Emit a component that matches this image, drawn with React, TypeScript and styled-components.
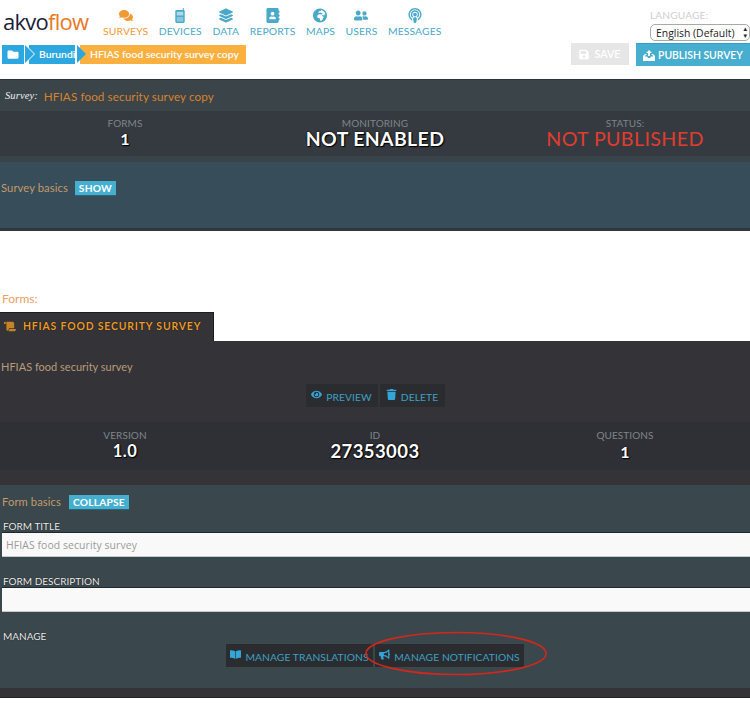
import React from "react";
import styled, { createGlobalStyle } from "styled-components";
import {
  FaComments, FaLayerGroup, FaAddressBook, FaGlobeAfrica, FaUserFriends, FaPodcast,
  FaFolder, FaSave, FaEye, FaTrash, FaBullhorn, FaScroll, FaBookOpen,
} from "react-icons/fa";

const Global = createGlobalStyle`
  html, body { margin: 0; padding: 0; background: #fff; overflow: hidden; }
  body { font-family: Lato, "Open Sans", sans-serif; }
  * { box-sizing: border-box; }
`;
const Page = styled.div`width: 750px; height: 704px; overflow: hidden;`;
const Header = styled.header`height: 79px; position: relative; display: flex; flex-direction: column;`;
const TopRow = styled.div`height: 43px; display: flex; align-items: flex-start;`;
const Logo = styled.div`
  width: 103px; padding: 6px 0 0 3px; font: 400 22px/30px "Open Sans", sans-serif; letter-spacing: -0.75px; color: #1d1c3a;
  span { color: #e8791f; }
`;
const Nav = styled.nav`display: flex; gap: 10.5px; padding-top: 8px;`;
const NavItem = styled.a<{ $active?: boolean }>`
  display: flex; flex-direction: column; align-items: center; gap: 1px;
  font: 400 10.4px/14px Lato, sans-serif; letter-spacing: 0.1px; color: ${p => p.$active ? "#f09a36" : "#4aa9c9"};
  svg { width: 14px; height: 15px; }
`;
const Lang = styled.div`
  margin-left: auto; width: 100px; padding-top: 8px; display: flex; flex-direction: column;
`;
const LangLabel = styled.div`font: 400 10.2px/14px Lato, sans-serif; color: #cfcfcf; letter-spacing: .1px; padding-bottom: 2px;`;
const SelectBox = styled.div`
  position: relative; height: 17px; border: 1px solid #a9a9a9; border-radius: 5px; background: #fff;
  select { display: block; appearance: none; border: 0; background: transparent; width: 100%; height: 100%; padding: 0 0 0 5px; font: 400 10.4px "Open Sans", sans-serif; color: #222; outline: 0; }
`;
const SelectArrows = styled.span`
  position: absolute; right: 2px; top: 1px; font: 7px/7px "DejaVu Sans", sans-serif; color: #222; display: flex; flex-direction: column;
`;
const ActionRow = styled.div`display: flex; align-items: flex-start; padding-left: 2px; height: 36px;`;
const Crumbs = styled.div`display: flex; padding-top: 2px;`;
const Crumb = styled.div<{ $w: number; $orange?: boolean; $ml?: number }>`
  position: relative; height: 19px; width: ${p => p.$w}px; margin-left: ${p => p.$ml ?? 0}px;
  background: ${p => p.$orange ? "#fbb040" : "#2da7e0"}; color: #fff;
  font: 600 10.35px/19px Lato, sans-serif; display: flex; align-items: center;
  svg { width: 12px; height: 11px; margin-left: 5px; }
`;
const Arrow = styled.span<{ $left: number; $c: string }>`
  position: absolute; left: ${p => p.$left}px; top: 0; width: 0; height: 0; z-index: 2;
  border-top: 9.5px solid transparent; border-bottom: 9.5px solid transparent; border-left: 9px solid ${p => p.$c};
`;
const CrumbText = styled.span<{ $pl: number }>`padding-left: ${p => p.$pl}px; white-space: nowrap;`;
const Actions = styled.div`margin-left: auto; display: flex; gap: 7px;`;
const SaveBtn = styled.div`
  width: 58px; height: 22px; background: #e6e6e6; color: #fff; display: flex; align-items: center; justify-content: center; gap: 5px;
  font: 600 10.8px/22px Lato, sans-serif; svg { width: 10px; height: 11px; }
`;
const PublishBtn = styled.div`
  width: 114px; height: 23px; background: #47aecf; border-top: 1px solid #2d9fd0; color: #fff; display: flex; align-items: center; justify-content: center; gap: 3px;
  font: 600 10.4px/22px Lato, sans-serif; svg { width: 12px; height: 11px; flex: none; }
`;
const TitleBand = styled.div`
  height: 32px; background: #3a4449; border-top: 1px solid #2c3338; display: flex; align-items: center; padding-left: 5px; gap: 6px;
  color: #d9822b; font: 400 11.7px/16px Lato, sans-serif; letter-spacing: .1px;
  i { font: italic 400 10.5px "Liberation Serif", serif; color: #eee; }
`;
const Stats = styled.div<{ $h: number; $bg: string }>`
  height: ${p => p.$h}px; background: ${p => p.$bg}; display: grid; grid-template-columns: repeat(3, 250px); text-align: center;
`;
const Stat = styled.div<{ $top: number }>`padding-top: ${p => p.$top}px;`;
const StatLabel = styled.div`font: 400 10px/12px Lato, sans-serif; color: #7f858a; letter-spacing: .1px;`;
const StatValue = styled.div<{ $red?: boolean; $size: number; $mt?: number }>`
  font: 700 ${p => p.$size}px/19px Lato, sans-serif; letter-spacing: .4px; color: ${p => p.$red ? "#e23c2f" : "#fff"};
  margin-top: ${p => p.$mt ?? 0}px;
  ${p => p.$red ? "font-weight: 400;" : "text-shadow: 0 0 2px #000, 1px 1px 1px #000;"}
`;
const Gap = styled.div<{ $h: number; $bg: string }>`height: ${p => p.$h}px; background: ${p => p.$bg};`;
const BasicsBand = styled.div`
  height: 66px; background: #374d59; display: flex; align-items: flex-start; gap: 7px; padding: 19px 0 0 1px;
`;
const OrangeLabel = styled.span`font: 400 11.2px/14px Lato, sans-serif; color: #c29a6b; letter-spacing: .1px;`;
const Pill = styled.span`
  background: #45afd0; color: #fff; font: 700 10.2px/14px Lato, sans-serif; padding: 0 4px; letter-spacing: .2px; box-shadow: 0 1px 0 #2b6478; display: inline-block;
`;
const Forms = styled.div`height: 81px; display: flex; align-items: flex-end; padding: 0 0 6px 2px; font: 400 12px/14px Lato, sans-serif; color: #e8a162;`;
const Tab = styled.div`
  width: 214px; height: 29px; background: #333338; border-top: 1px solid #1c1c20; border-right: 1px solid #1c1c20;
  display: flex; align-items: center; gap: 7px; padding: 0 0 2px 4px; white-space: nowrap;
  color: #ed9a2b; font: 700 10.4px/14px Lato, sans-serif; letter-spacing: .85px; text-shadow: 0 0 1px #000;
  svg { width: 12px; height: 13px; color: #c78426; flex: none; }
`;
const FormPanel = styled.section`background: #333338; height: 356px; display: flex; flex-direction: column;`;
const FormName = styled.div`padding: 19px 0 0 1px; height: 43px; font: 400 11px/14px Lato, sans-serif; color: #b89b78;`;
const BtnRow = styled.div`display: flex; justify-content: center; gap: 2px;`;
const DarkBtn = styled.div<{ $w: number }>`
  height: 23px; width: ${p => p.$w}px; background: #2b2c30; display: flex; align-items: center; justify-content: center; gap: 4px; flex: none; padding-top: 3px;
  color: #3da0c4; font: 400 10.3px/14px Lato, sans-serif; letter-spacing: .05px; white-space: nowrap;
  svg { width: 11px; height: 11px; color: #35a4d6; margin-top: -5px; flex: none; }
`;
const FormStatsWrap = styled.div`margin-top: 15px;`;
const Basics = styled.div`margin-top: 15px; height: 203px; background: #3a474d; padding: 9px 0 0 2px; position: relative;`;
const BasicsHead = styled.div`display: flex; align-items: center; gap: 8px; height: 15px;`;
const FieldLabel = styled.div`font: 400 10px/12px Lato, sans-serif; color: #eee; text-shadow: 0 0 1px #000; padding-left: 1px;`;
const Input = styled.div`
  height: 25px; background: #f9f9f9; border-top: 1px solid #1f2a30; border-bottom: 1px solid #c4c8c9; margin-bottom: 18px;
  padding-left: 4px; font: 400 10.4px/25px "Open Sans", sans-serif; color: #9b9b9b; letter-spacing: .1px;
`;
const LabelBlock = styled.div`padding-top: 11px;`;
const ManageRow = styled.div`display: flex; justify-content: center; gap: 2px; width: 750px; margin-left: -2px; position: relative; margin-top: 2px;`;
const ManageLabel = styled(FieldLabel)`margin-bottom: 2px; margin-top: 0;`;
const Ellipse = styled.svg`position: absolute; left: 363px; top: -13px; width: 186px; height: 46px; pointer-events: none;`;
const Bottom = styled.div`height: 8px; background: #fff; border-top: 1px solid #1f2024;`;

const PhoneIcon = () => (
  <svg viewBox="0 0 14 16" fill="currentColor">
    <rect x="10" y="0" width="1" height="3" />
    <rect x="2" y="2" width="10" height="14" rx="1.5" />
    <rect x="3.5" y="4" width="7" height="4" fill="#fff" opacity=".55" />
    <rect x="3.5" y="9.5" width="7" height="5" fill="#fff" opacity=".35" />
  </svg>
);
const PublishIcon = () => (
  <svg viewBox="0 0 12 11" fill="currentColor">
    <path d="M6 0 9 3H7v3H5V3H3zM0 6l2-2h1.5v1H2.6L1.6 6.5H4L5 8h2l1-1.5h2.4l-1-1.5H8.500V4H10l2 2v5H0z" />
  </svg>
);

const navItems: [string, React.ReactNode, boolean?][] = [
  ["SURVEYS", <FaComments />, true], ["DEVICES", <PhoneIcon />], ["DATA", <FaLayerGroup />], ["REPORTS", <FaAddressBook />],
  ["MAPS", <FaGlobeAfrica />], ["USERS", <FaUserFriends />], ["MESSAGES", <FaPodcast />],
];

export default function App() {
  return (
    <Page>
      <Global />
      <Header>
        <TopRow>
          <Logo>akvo<span>flow</span></Logo>
          <Nav>
            {navItems.map(([t, icon, active]) => (
              <NavItem key={t} $active={active}>{icon}{t}</NavItem>
            ))}
          </Nav>
          <Lang>
            <LangLabel>LANGUAGE:</LangLabel>
            <SelectBox>
              <select defaultValue="en"><option value="en">English (Default)</option></select>
              <SelectArrows><span>▴</span><span>▾</span></SelectArrows>
            </SelectBox>
          </Lang>
        </TopRow>
        <ActionRow>
          <Crumbs>
            <Crumb $w={22}><FaFolder /></Crumb>
            <Crumb $w={46} $ml={5}><Arrow $left={-3} $c="#fff" /><Arrow $left={-4} $c="#2da7e0" /><CrumbText $pl={10}>Burundi</CrumbText></Crumb>
            <Crumb $w={166} $ml={5} $orange><Arrow $left={-3} $c="#2da7e0" /><CrumbText $pl={10}>HFIAS food security survey copy</CrumbText></Crumb>
          </Crumbs>
          <Actions>
            <SaveBtn><FaSave />SAVE</SaveBtn>
            <PublishBtn><PublishIcon />PUBLISH SURVEY</PublishBtn>
          </Actions>
        </ActionRow>
      </Header>
      <TitleBand><i>Survey:</i>HFIAS food security survey copy</TitleBand>
      <Stats $h={45} $bg="#343a40">
        <Stat $top={6}><StatLabel>FORMS</StatLabel><StatValue $size={16}>1</StatValue></Stat>
        <Stat $top={6}><StatLabel>MONITORING</StatLabel><StatValue $size={19.4}>NOT ENABLED</StatValue></Stat>
        <Stat $top={6}><StatLabel>STATUS:</StatLabel><StatValue $size={19.6} $red>NOT PUBLISHED</StatValue></Stat>
      </Stats>
      <Gap $h={6} $bg="#39444a" />
      <BasicsBand><OrangeLabel>Survey basics</OrangeLabel><Pill>SHOW</Pill></BasicsBand>
      <Gap $h={3} $bg="#31373c" />
      <Forms>Forms:</Forms>
      <Tab><FaScroll />HFIAS FOOD SECURITY SURVEY</Tab>
      <FormPanel>
        <FormName>HFIAS food security survey</FormName>
        <BtnRow>
          <DarkBtn $w={72}><FaEye />PREVIEW</DarkBtn>
          <DarkBtn $w={65}><FaTrash />DELETE</DarkBtn>
        </BtnRow>
        <FormStatsWrap>
          <Stats $h={48} $bg="#2f3036">
            <Stat $top={7}><StatLabel>VERSION</StatLabel><StatValue $size={16.5} $mt={1}>1.0</StatValue></Stat>
            <Stat $top={7}><StatLabel>ID</StatLabel><StatValue $size={18.5} $mt={1}>27353003</StatValue></Stat>
            <Stat $top={7}><StatLabel>QUESTIONS</StatLabel><StatValue $size={16} $mt={1}>1</StatValue></Stat>
          </Stats>
        </FormStatsWrap>
        <Basics>
          <BasicsHead><OrangeLabel>Form basics</OrangeLabel><Pill>COLLAPSE</Pill></BasicsHead>
          <LabelBlock><FieldLabel>FORM TITLE</FieldLabel></LabelBlock>
          <Input>HFIAS food security survey</Input>
          <FieldLabel>FORM DESCRIPTION</FieldLabel>
          <Input />
          <ManageLabel>MANAGE</ManageLabel>
          <ManageRow>
            <DarkBtn $w={147}><FaBookOpen />MANAGE TRANSLATIONS</DarkBtn>
            <DarkBtn $w={149}><FaBullhorn />MANAGE NOTIFICATIONS</DarkBtn>
            <Ellipse viewBox="0 0 186 46">
              <ellipse cx="93" cy="22.500" rx="90" ry="21" fill="none" stroke="#d2281c" strokeWidth="1.6" />
            </Ellipse>
          </ManageRow>
        </Basics>
      </FormPanel>
      <Bottom />
    </Page>
  );
}
